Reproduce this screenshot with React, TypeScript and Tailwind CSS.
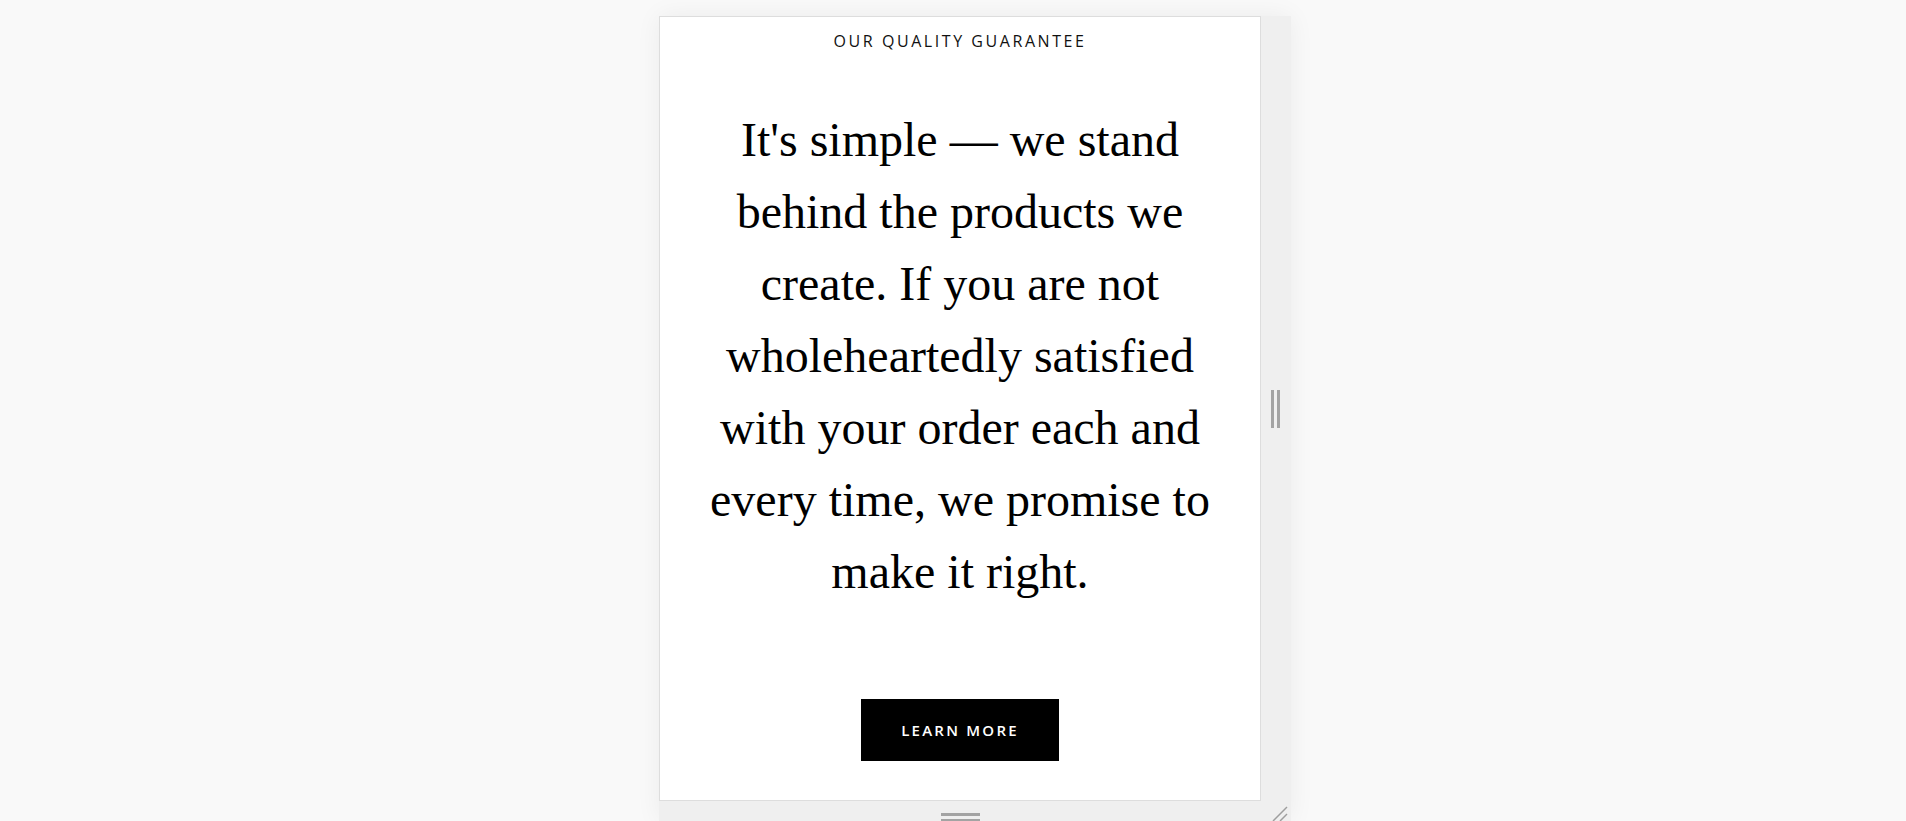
import React from 'react';

// Quality guarantee card, shown inside a resizable preview frame
const lines = [
  "It's simple \u2014 we stand",
  'behind the products we',
  'create. If you are not',
  'wholeheartedly satisfied',
  'with your order each and',
  'every time, we promise to',
  'make it right.',
];

const App = () => {
  return (
    <div className="min-h-screen bg-[#f9f9f9] pt-[16px] pl-[659px]">
      <div className="inline-grid grid-cols-[602px_30px] grid-rows-[785px_20px] shadow-[0_0_24px_rgba(0,0,0,0.06)]">
        <div className="flex flex-col items-center border border-[#dddddd] bg-white">
          <p className="mt-[13px] text-[16px] leading-[22px] tracking-[0.16em] text-[#111] font-['Open_Sans',sans-serif]">
            OUR QUALITY GUARANTEE
          </p>

          <h1 className="mt-[52px] text-center text-[48px] leading-[72px] text-black font-['Liberation_Serif',serif]">
            {lines.map((line, i) => (
              <span key={i} className="block">{line}</span>
            ))}
          </h1>

          <button className="mt-[91px] h-[62px] w-[198px] bg-black text-[15px] font-semibold tracking-[0.15em] text-white font-['Open_Sans',sans-serif]">
            LEARN MORE
          </button>
        </div>

        {/* right resize strip */}
        <div className="flex items-center justify-center gap-[3px] bg-[#efefef] pr-[2px]">
          <span className="h-[38px] w-[3px] bg-[#a3a3a3]" />
          <span className="h-[38px] w-[3px] bg-[#a3a3a3]" />
        </div>

        {/* bottom resize strip */}
        <div className="flex flex-col items-center gap-[3px] overflow-hidden bg-[#efefef] pt-[12px]">
          <span className="h-[3px] w-[39px] shrink-0 bg-[#a3a3a3]" />
          <span className="h-[3px] w-[39px] shrink-0 bg-[#a3a3a3]" />
        </div>

        {/* corner handle */}
        <div className="bg-[#efefef]">
          <svg width="30" height="20" viewBox="0 0 30 20">
            <line x1="12" y1="20" x2="26" y2="6" stroke="#9e9e9e" strokeWidth="1.5" />
            <line x1="19" y1="20" x2="26" y2="13" stroke="#9e9e9e" strokeWidth="1.5" />
          </svg>
        </div>
      </div>
    </div>
  );
};

export default App;
